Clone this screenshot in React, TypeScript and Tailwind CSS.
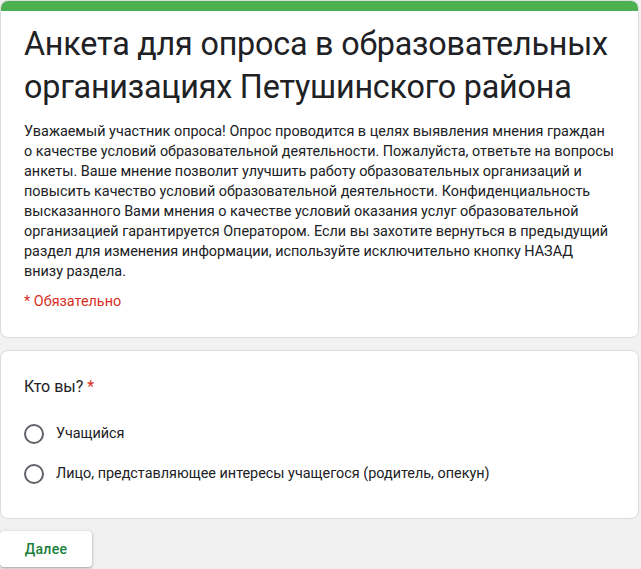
export default function App() {
  const options = [
    "Учащийся",
    "Лицо, представляющее интересы учащегося (родитель, опекун)",
  ];

  const description = [
    "Уважаемый участник опроса! Опрос проводится в целях выявления мнения граждан",
    "о качестве условий образовательной деятельности. Пожалуйста, ответьте на вопросы",
    "анкеты. Ваше мнение позволит улучшить работу образовательных организаций и",
    "повысить качество условий образовательной деятельности. Конфиденциальность",
    "высказанного Вами мнения о качестве условий оказания услуг образовательной",
    "организацией гарантируется Оператором. Если вы захотите вернуться в предыдущий",
    "раздел для изменения информации, используйте исключительно кнопку НАЗАД",
    "внизу раздела.",
  ];

  return (
    <div className="min-h-[569px] bg-[#f1f1f1] font-['Roboto',sans-serif] text-[#202124]">
      <div className="w-[639px] flex flex-col gap-[12px]">
        {/* header card */}
        <div className="bg-white rounded-[8px] border border-[#dadce0] overflow-hidden">
          <div className="h-[10px] bg-[#4caf50]" />
          <div className="px-[23px] pt-[12px] pb-[25px]">
            <h1 className="text-[32.3px] leading-[43px] tracking-[-0.2px] text-[#202124]">
              Анкета для опроса в образовательных организациях Петушинского района
            </h1>
            <p className="mt-[13px] text-[14.4px] leading-[20px] text-[#202124]">
              {description.map((line) => (
                <span key={line} className="block whitespace-nowrap">
                  {line}
                </span>
              ))}
            </p>
            <div className="mt-[10px] text-[14.4px] leading-[20px] text-[#d93025]">* Обязательно</div>
          </div>
        </div>

        {/* question card */}
        <div className="bg-white rounded-[8px] border border-[#dadce0] px-[23px] pt-[24px] pb-[34px]">
          <div className="text-[16px] leading-[24px]">
            Кто вы? <span className="text-[#d93025]">*</span>
          </div>
          <div className="mt-[25px] flex flex-col gap-[20px]">
            {options.map((o) => (
              <label key={o} className="flex items-center gap-[12px] text-[14.4px] leading-[20px]">
                <span className="w-[20px] h-[20px] rounded-full border-2 border-[#5f6368] shrink-0" />
                {o}
              </label>
            ))}
          </div>
        </div>

        <div>
          <button className="w-[92px] h-[36px] bg-white rounded-[4px] shadow-[0_1px_2px_rgba(60,64,67,0.3),0_1px_3px_1px_rgba(60,64,67,0.15)] text-[14px] font-medium text-[#188038] tracking-[0.25px]">
            Далее
          </button>
        </div>
      </div>
    </div>
  );
}
